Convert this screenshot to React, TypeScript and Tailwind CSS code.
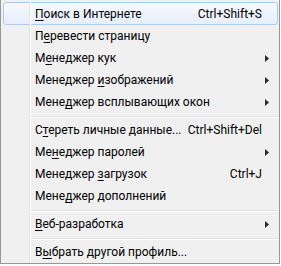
type Item =
  | { sep: true }
  | {
      sep?: false;
      pre: string;
      key: string;
      post: string;
      shortcut?: string;
      sub?: boolean;
      hot?: boolean;
    };

const items: Item[] = [
  { pre: "", key: "П", post: "оиск в Интернете", shortcut: "Ctrl+Shift+S", hot: true },
  { pre: "П", key: "е", post: "ревести страницу" },
  { pre: "М", key: "е", post: "неджер кук", sub: true },
  { pre: "Менеджер ", key: "и", post: "зображений", sub: true },
  { pre: "Мене", key: "д", post: "жер всплывающих окон", sub: true },
  { sep: true },
  { pre: "С", key: "т", post: "ереть личные данные...", shortcut: "Ctrl+Shift+Del" },
  { pre: "Ме", key: "н", post: "еджер паролей", sub: true },
  { pre: "Менеджер ", key: "з", post: "агрузок", shortcut: "Ctrl+J" },
  { pre: "Мене", key: "д", post: "жер дополнений" },
  { sep: true },
  { pre: "", key: "В", post: "еб-разработка", sub: true },
  { sep: true },
  { pre: "В", key: "ы", post: "брать другой профиль..." },
];

function Arrow() {
  return (
    <svg width="4" height="7" viewBox="0 0 4 7" className="ml-[3px]">
      <polygon points="0,0 4,3.5 0,7" fill="#2b2b2b" />
    </svg>
  );
}

export default function App() {
  return (
    <div className="w-[281px] h-[266px] bg-white">
      <div className="relative w-[280px] h-[264px] border-x border-b border-[#979797] bg-[#f0f0f0] pt-[3px] pl-[2px] pr-[1px] font-['Roboto',sans-serif] text-[12px] text-black">
        {items.map((it, i) =>
          it.sep ? (
            <div key={i} className="h-[6px] pt-[3px] ml-[28px]">
              <div className="h-px bg-[#e0e0e0]" />
              <div className="h-px bg-white" />
            </div>
          ) : (
            <div key={i} className="relative flex items-center h-[22px] pl-[32px]">
              {it.hot && (
                <div className="absolute -top-px bottom-0 inset-x-0 rounded-[3px] border border-[#a8cbf1] bg-gradient-to-b from-[#f6f9fe] to-[#e6effb]" />
              )}
              <span className="relative flex-1 whitespace-nowrap">
                {it.pre}
                <span className="underline underline-offset-2">{it.key}</span>
                {it.post}
              </span>
              {it.shortcut && <span className="relative whitespace-nowrap">{it.shortcut}</span>}
              <span className="relative flex items-center w-[16px]">{it.sub && <Arrow />}</span>
            </div>
          )
        )}
        <div className="absolute left-[28px] top-0 bottom-0 w-px bg-[#e2e3e3]" />
        <div className="absolute left-[29px] top-0 bottom-0 w-px bg-white" />
      </div>
    </div>
  );
}
